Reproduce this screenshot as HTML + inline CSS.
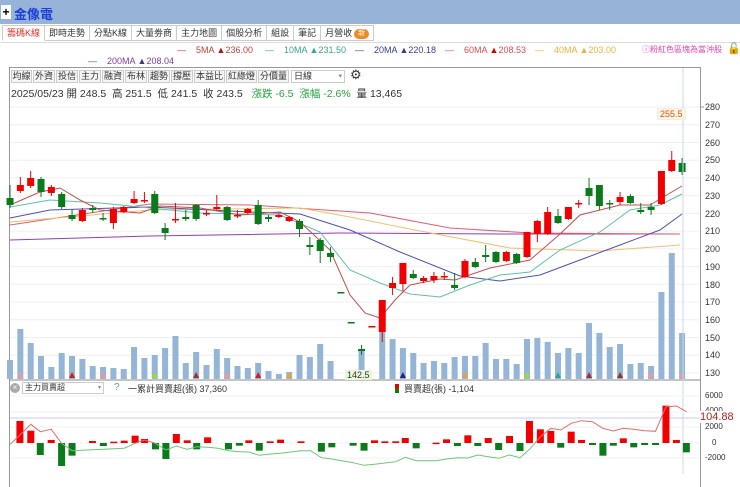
<!DOCTYPE html>
<html><head><meta charset="utf-8">
<style>
*{margin:0;padding:0;box-sizing:border-box}
body{width:740px;height:474px;overflow:hidden;background:#fff;font-family:"Liberation Sans","Noto Sans CJK TC",sans-serif;position:relative}
.top{position:absolute;left:0;top:0;width:740px;height:24px;background:#97b3d7}
.plus{position:absolute;left:1px;top:5px;width:10px;height:14px;background:#fff;font-size:12px;line-height:14px;text-align:center;font-weight:bold}
.name{position:absolute;left:14px;top:4px;font-size:13px;color:#1a3fd8;font-weight:bold}
.tabs{position:absolute;left:2px;top:25px;height:17px;display:flex}
.tab{border:1px solid #ccc;border-left:none;height:16px;font-size:9px;line-height:15px;padding:0 4px;color:#333;background:#fff}
.tab:first-child{border-left:1px solid #ccc;color:#e0342c;border-bottom-color:#fff}
.new{display:inline-block;background:#f08a24;color:#fff;font-size:7px;border-radius:6px;padding:0 4px;line-height:10px;vertical-align:1px;margin-left:2px}
.leg{position:absolute;font-size:9px;white-space:nowrap}
.btn{position:absolute;top:70px;height:13px;border:1px solid #ccc;background:#f5f5f5;font-size:9px;line-height:11px;text-align:center;color:#333}
.ax{position:absolute;left:705px;font-size:9px;color:#333}
</style></head><body>
<div class="top"><div class="plus">+</div><div class="name">金像電</div></div>
<div class="tabs"><div class="tab">籌碼K線</div><div class="tab">即時走勢</div><div class="tab">分點K線</div><div class="tab">大量劵商</div><div class="tab">主力地圖</div><div class="tab">個股分析</div><div class="tab">組設</div><div class="tab">筆記</div><div class="tab">月營收<span class="new">新</span></div></div>
<div style="position:absolute;left:0;top:42px;width:740px;border-top:1px solid #ddd"></div>
<div class="leg" style="left:177px;top:45px;color:#c04040">—&nbsp;&nbsp;&nbsp;&nbsp;5MA <span style="color:#b01010">▲</span>236.00</div>
<div class="leg" style="left:265px;top:45px;color:#3aa58f">—&nbsp;&nbsp;&nbsp;&nbsp;10MA <span>▲</span>231.50</div>
<div class="leg" style="left:355px;top:45px;color:#3b3b8f">—&nbsp;&nbsp;&nbsp;&nbsp;20MA ▲220.18</div>
<div class="leg" style="left:445px;top:45px;color:#e04858">—&nbsp;&nbsp;&nbsp;&nbsp;60MA <span style="color:#c00">▲</span>208.53</div>
<div class="leg" style="left:535px;top:45px;color:#f0b040">—&nbsp;&nbsp;&nbsp;&nbsp;40MA ▲203.00</div>
<div class="leg" style="left:88px;top:56px;color:#8040a0">—&nbsp;&nbsp;&nbsp;&nbsp;200MA <span style="color:#3b3b8f">▲</span>208.04</div>
<div class="leg" style="left:642px;top:44px;color:#e040b0;font-size:8px">ⓘ粉紅色區塊為當沖股</div>
<div class="leg" style="left:727px;top:42px;font-size:11px">🔓</div>
<div style="position:absolute;left:9px;top:67px;width:692px;height:420px;border:1px solid #999;border-bottom:none"></div>
<div class="btn" style="left:11px;width:21px">均線</div><div class="btn" style="left:33px;width:22px">外資</div><div class="btn" style="left:56px;width:22px">投信</div><div class="btn" style="left:79px;width:22px">主力</div><div class="btn" style="left:102px;width:22px">融資</div><div class="btn" style="left:125px;width:22px">布林</div><div class="btn" style="left:148px;width:22px">趨勢</div><div class="btn" style="left:171px;width:22px">撐壓</div><div class="btn" style="left:194px;width:31px">本益比</div><div class="btn" style="left:226px;width:31px">紅綠燈</div><div class="btn" style="left:258px;width:31px">分價量</div>
<div class="btn" style="left:291px;width:54px;background:#fff;text-align:left;padding-left:2px">日線<span style="float:right;font-size:7px;color:#888;padding-right:2px">▾</span></div>
<div class="leg" style="left:350px;top:67px;font-size:13px;color:#333">⚙</div>
<div class="leg" style="left:11px;top:86px;font-size:10.5px;color:#333">2025/05/23 開 248.5&nbsp; 高 251.5&nbsp; 低 241.5&nbsp; 收 243.5&nbsp;&nbsp; <span style="color:#28a040">漲跌 -6.5&nbsp; 漲幅 -2.6%</span>&nbsp; 量 13,465</div>
<svg id="s" width="740" height="474" style="position:absolute;left:0;top:0"></svg>
<div class="ax" style="top:102px">280</div><div class="ax" style="top:120px">270</div><div class="ax" style="top:138px">260</div><div class="ax" style="top:155px">250</div><div class="ax" style="top:173px">240</div><div class="ax" style="top:191px">230</div><div class="ax" style="top:209px">220</div><div class="ax" style="top:226px">210</div><div class="ax" style="top:244px">200</div><div class="ax" style="top:262px">190</div><div class="ax" style="top:280px">180</div><div class="ax" style="top:297px">170</div><div class="ax" style="top:315px">160</div><div class="ax" style="top:333px">150</div><div class="ax" style="top:350px">140</div><div class="ax" style="top:368px">130</div>
<div class="ax" style="top:391px;font-size:8px">6000</div><div class="ax" style="top:406px;font-size:8px">4000</div><div class="ax" style="top:422px;font-size:8px">2000</div><div class="ax" style="top:438px;font-size:8px;left:712px">0</div><div class="ax" style="top:453px;font-size:8px">-2000</div>
<div class="leg" style="left:699px;top:411px;background:#fff;color:#b02020;font-size:11px;padding:0 1px">104.88</div>
<div class="leg" style="left:657px;top:108px;background:#fdf6dc;border:1px solid #eee;color:#e05020;font-size:9px;padding:0 2px">255.5</div>
<div class="leg" style="left:345px;top:370px;background:#eaf6d8;color:#333;font-size:9px;padding:0 2px">142.5</div>
<div style="position:absolute;left:10px;top:383px;width:10px;height:10px;border-radius:5px;background:#aaa;color:#fff;font-size:8px;line-height:10px;text-align:center">×</div>
<div style="position:absolute;left:22px;top:382px;width:82px;height:12px;border:1px solid #ccc;font-size:8px;line-height:10px;padding-left:2px;color:#333">主力買賣超<span style="float:right;font-size:6px;color:#888;padding-right:2px">▾</span></div>
<div class="leg" style="left:114px;top:382px;color:#6688cc;font-size:10px">?</div>
<div class="leg" style="left:128px;top:382px;color:#333">一累計買賣超(張) 37,360</div>
<div class="leg" style="left:395px;top:382px;color:#333"><span style="display:inline-block;width:4px;height:9px;background:linear-gradient(#e00 50%,#080 50%);vertical-align:-1px"></span>&nbsp; 買賣超(張) -1,104</div>
<script>
var S=[];
function X(i){return 10+i*10.34}
for(var p=0;p<16;p++){var y=107+p*17.73;S.push('<line x1="10" x2="700" y1="'+y+'" y2="'+y+'" stroke="#f0f0f0"/>');}
S.push('<line x1="700" x2="704" y1="107" y2="107" stroke="#999"/>');
var vol=[360,329,343,356,367,353,356,359,366,367,368,369,347,358,355,348,336,363,352,365,349,358,366,368,363,371,374,372,355,357,344,361,0,0,350,0,327,339,348,353,363,361,363,357,356,356,343,359,359,364,339,338,342,353,348,353,323,333,347,344,364,363,366,292,253,333];
vol.forEach(function(v,i){if(v)S.push('<rect x="'+(X(i)-3)+'" y="'+v+'" width="6" height="'+(379-v)+'" fill="#94b5d6"/>');});
[[1,'#e99'],[6,'#c22'],[9,'#e99'],[14,'#9d3'],[18,'#933'],[21,'#e99'],[24,'#c22'],[27,'#e9a040'],[38,'#228'],[44,'#e9a040'],[50,'#9d3'],[53,'#2a9'],[56,'#933'],[59,'#933'],[62,'#e99'],[65,'#e99']].forEach(function(t){var x=X(t[0]);S.push('<polygon points="'+(x-3)+',378 '+(x+3)+',378 '+x+',372" fill="'+t[1]+'"/>');});
function line(pts,c){S.push('<polyline fill="none" stroke="'+c+'" stroke-width="1" points="'+pts.join(' ')+'"/>');}
line(['10,240','150,236','340,233','500,234','680,234'],'#9040b0');
line(['10,225','150,204','250,205','370,213','450,228','530,233','680,234'],'#e06070');
line(['10,222','150,210','300,208','350,217','420,231','510,248','600,251','680,245'],'#f0c070');
line(['10,218','50,210','150,207','250,212','300,214','350,230','400,252','460,276','500,281','540,275','580,260','620,245','660,230','682,214'],'#5050b0');
line(['10,207','50,200','100,203','200,213','280,215','320,232','350,270','380,283','410,294','440,297','470,285','500,275','530,272','560,250','600,232','630,210','660,205','682,194'],'#60c0a8');
line(['10,205','40,192','60,188','80,200','100,210','140,213','160,206','200,208','240,215','280,212','300,222','330,250','350,295','365,313','380,318','395,300','410,285','440,279','455,280','490,268','530,260','560,234','580,215','620,205','650,205','665,196','682,186'],'#c05050');
var C=[[198,205,185,208,'g'],[185,191,177,193,'r'],[178,186,171,188,'r'],[179,192,177,197,'g'],[187,193,185,196,'r'],[194,207,192,209,'g'],[215,219,209,221,'g'],[210,221,208,222,'r'],[208,210,205,213,'g'],[218,219,213,221,'g'],[209,223,207,229,'r'],[207,212,206,213,'r'],[199,203,191,204,'r'],[200,201,192,203,'r'],[194,213,191,214,'g'],[228,233,223,240,'g'],[219,220,203,223,'r'],[217,219,210,221,'g'],[205,219,204,221,'g'],[213,213.8,210,216,'r'],[207,209,195,210,'r'],[207,220,206,221,'g'],[215,215.8,210,218,'r'],[209,213,208,214,'r'],[205,224,200,225,'g'],[217,219,215,222,'g'],[215,217,214,218,'r'],[217,221,216,222,'r'],[221,229,219,237,'g'],[245,247,237,255,'g'],[240,251,238,263,'g'],[253,257,247,262,'g'],[292,293,292,293,'g'],[322,323,322,323,'g'],[349,351,345,355,'g'],[326,327,326,327,'r'],[300,332,300,342,'r'],[283,288,277,295,'r'],[263,284,263,291,'r'],[274,278,270,279,'g'],[278,281,276,283,'r'],[276,280,272,283,'r'],[276,277,272,280,'r'],[285,288,273,290,'g'],[261,277,259,278,'r'],[262,267,258,268,'g'],[255,257,245,262,'g'],[252,262,251,263,'g'],[252,261,251,262,'r'],[254,263,253,264,'g'],[232,257,232,258,'r'],[221,234,220,242,'r'],[212,234,207,235,'r'],[216,223,209,224,'g'],[207,219,207,220,'r'],[203,204,200,208,'r'],[188,196,178,205,'g'],[185,206,185,210,'g'],[203,204,200,210,'g'],[197,202,192,205,'r'],[196,203,194,204,'g'],[210,212,203,214,'g'],[207,210,203,215,'g'],[171,204,171,205,'r'],[160,171,151,172,'r'],[163,172,158,175,'g']];
C.forEach(function(c,i){var x=X(i),col=c[4]=='r'?'#f00000':'#0a7a1a';S.push('<line x1="'+x+'" x2="'+x+'" y1="'+c[2]+'" y2="'+c[3]+'" stroke="'+col+'"/>');S.push('<rect x="'+(x-3.5)+'" y="'+c[0]+'" width="7" height="'+Math.max(1.5,c[1]-c[0])+'" fill="'+col+'"/>');});
S.push('<line x1="9" x2="701" y1="380" y2="380" stroke="#888"/>');
S.push('<line x1="683" x2="683" y1="68" y2="474" stroke="#c8d4ee"/>');
[396,412,427,458].forEach(function(y){S.push('<line x1="10" x2="700" y1="'+y+'" y2="'+y+'" stroke="#f2f2f2"/>');});
S.push('<line x1="10" x2="700" y1="418" y2="418" stroke="#c8ccee"/>');
S.push('<line x1="10" x2="700" y1="443" y2="443" stroke="#eee" stroke-dasharray="3,2"/>');
var B=[[42,183],[65,212],[85,285],[108,240],[130,318],[152,287],[195,243],[218,258],[240,245],[262,242],[285,227],[305,237],[328,268],[350,297],[372,222],[395,241],[415,268],[438,232],[482,268],[505,257],[525,241],[547,272],[570,244],[592,239],[635,244],[678,275],[700,262],[745,257],[768,272],[790,241],[812,244],[835,244],[855,234],[878,265],[920,248],[942,238],[965,258],[987,226],[1008,258],[1030,234],[1052,270],[1075,228],[1097,273],[1117,183],[1140,208],[1162,213],[1183,263],[1205,215],[1227,240],[1250,255],[1272,287],[1294,257],[1315,235],[1337,262],[1360,255],[1383,255],[1405,137],[1427,240],[1448,277]];
B.forEach(function(b){var x=b[0]*0.474,y=360+b[1]/3,z=443;var t=Math.min(y,z),h=Math.max(1.5,Math.abs(y-z));S.push('<rect x="'+(x-3.5)+'" y="'+t+'" width="7" height="'+h+'" fill="'+(y<z?'#f00000':'#0a7a1a')+'"/>');});
var L=[[20,255],[42,225],[65,193],[85,215],[108,208],[130,250],[152,272],[218,268],[262,265],[285,250],[305,240],[328,250],[350,270],[372,258],[395,268],[415,260],[438,262],[460,265],[482,272],[505,275],[525,276],[547,286],[570,282],[592,280],[635,272],[655,272],[678,293],[700,297],[745,308],[768,316],[790,313],[835,305],[855,292],[878,302],[920,302],[942,297],[965,293],[987,294],[1008,285],[1030,290],[1052,295],[1075,285],[1097,293],[1117,268],[1140,230],[1162,205],[1183,210],[1205,190],[1227,182],[1250,185],[1272,205],[1294,213],[1315,205],[1337,208],[1360,212],[1383,214],[1405,140],[1427,138],[1448,155]].map(function(p){return (p[0]*0.474).toFixed(1)+','+(360+p[1]/3).toFixed(1)}).join(' ');
S.push('<defs><clipPath id="up"><rect x="0" y="380" width="700" height="63"/></clipPath><clipPath id="dn"><rect x="0" y="443" width="700" height="40"/></clipPath></defs>');
S.push('<polyline clip-path="url(#up)" fill="none" stroke="#e86a6a" points="'+L+'"/>');
S.push('<polyline clip-path="url(#dn)" fill="none" stroke="#6cc67a" points="'+L+'"/>');
document.getElementById('s').innerHTML=S.join('');
</script>
</body></html>
